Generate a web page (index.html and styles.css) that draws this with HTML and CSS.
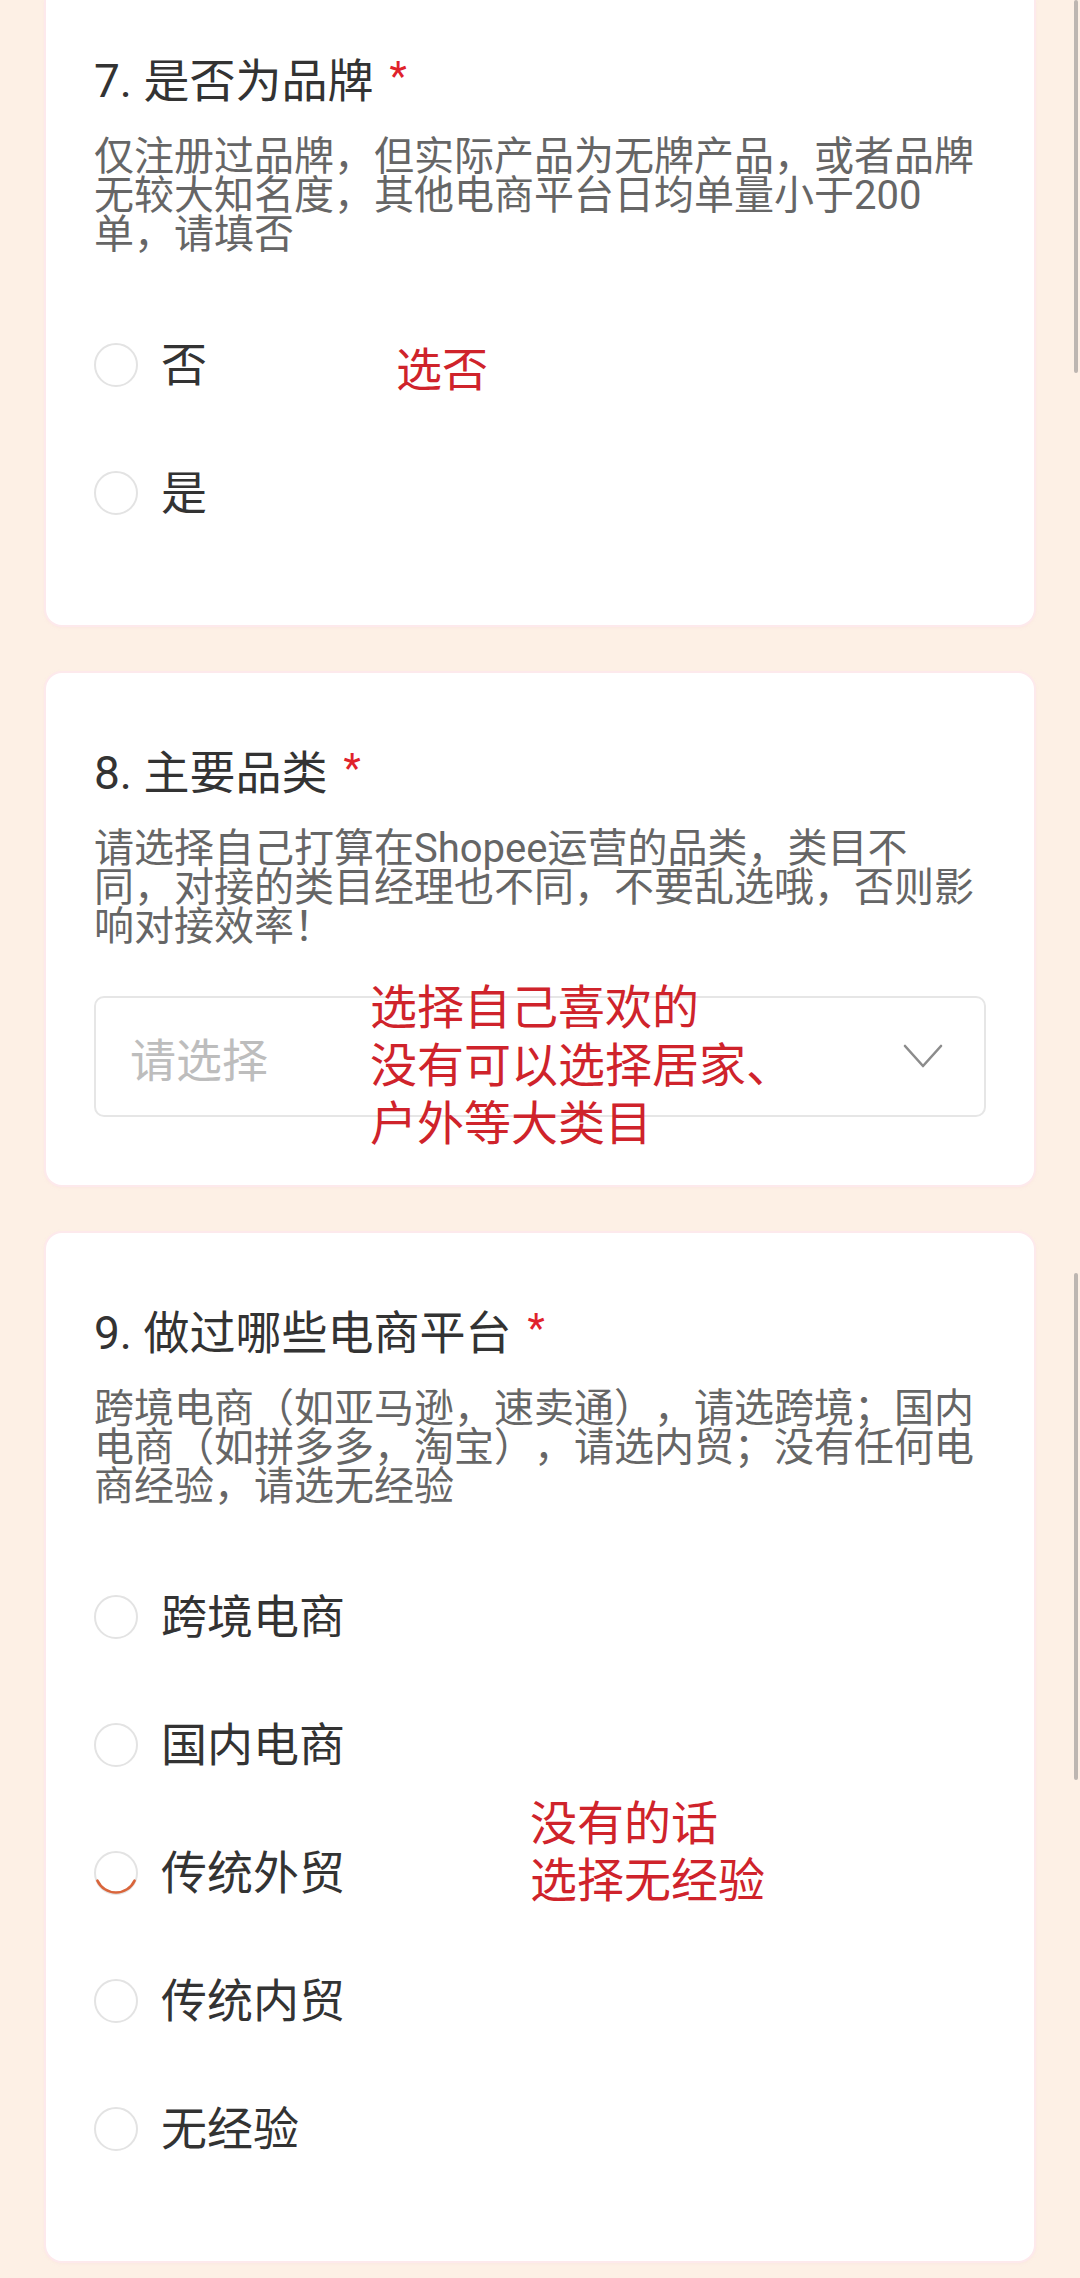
FILE: index.html
```html
<!DOCTYPE html>
<html lang="zh-CN">
<head>
<meta charset="utf-8">
<title>问卷</title>
<link rel="stylesheet" href="styles.css">
</head>
<body>
<div class="page">
  <section class="card card--cut">
    <h2 class="q-title">7. 是否为品牌<span class="req">*</span></h2>
    <p class="q-desc">仅注册过品牌，但实际产品为无牌产品，或者品牌无较大知名度，其他电商平台日均单量小于200单，请填否</p>
    <ul class="options">
      <li class="option"><span class="radio"></span><span class="opt-text">否</span></li>
      <li class="option"><span class="radio"></span><span class="opt-text">是</span></li>
    </ul>
    <div class="note note--a">选否</div>
  </section>

  <section class="card">
    <h2 class="q-title">8. 主要品类<span class="req">*</span></h2>
    <p class="q-desc">请选择自己打算在Shopee运营的品类，类目不同，对接的类目经理也不同，不要乱选哦，否则影响对接效率！</p>
    <div class="select">
      <span class="placeholder">请选择</span>
      <svg class="chevron" width="40" height="25" viewBox="0 0 40 25" aria-hidden="true">
        <path d="M2 2 L20 22 L38 2" fill="none" stroke="#8c8c8c" stroke-width="2.6" stroke-linecap="round" stroke-linejoin="round"/>
      </svg>
    </div>
    <div class="note note--b">选择自己喜欢的<br>没有可以选择居家、<br>户外等大类目</div>
  </section>

  <section class="card card--last">
    <h2 class="q-title">9. 做过哪些电商平台<span class="req">*</span></h2>
    <p class="q-desc">跨境电商（如亚马逊，速卖通），请选跨境；国内电商（如拼多多，淘宝），请选内贸；没有任何电商经验，请选无经验</p>
    <ul class="options">
      <li class="option"><span class="radio"></span><span class="opt-text">跨境电商</span></li>
      <li class="option"><span class="radio"></span><span class="opt-text">国内电商</span></li>
      <li class="option"><span class="radio radio--busy"><svg class="arc" width="44" height="44" viewBox="0 0 44 44" aria-hidden="true"><path d="M3.4 29.6 A20.5 20.5 0 0 0 40.6 29.6" fill="none" stroke="#d9653b" stroke-width="2.6" stroke-linecap="round"/></svg></span><span class="opt-text">传统外贸</span></li>
      <li class="option"><span class="radio"></span><span class="opt-text">传统内贸</span></li>
      <li class="option"><span class="radio"></span><span class="opt-text">无经验</span></li>
    </ul>
    <div class="note note--c">没有的话<br>选择无经验</div>
  </section>

  <div class="scrollbar scrollbar--top"></div>
  <div class="scrollbar scrollbar--mid"></div>
</div>
</body>
</html>
```

FILE: styles.css
```css
html, body {
  margin: 0;
  padding: 0;
}

body {
  background: #fdf0e5;
  font-family: Roboto, "Noto Sans CJK SC", "Noto Sans", sans-serif;
  color: #333333;
  text-spacing-trim: space-all;
}

.page {
  position: relative;
  width: 1080px;
  height: 2278px;
  overflow: hidden;
  display: flex;
  flex-direction: column;
  gap: 48px;
}

.card {
  position: relative;
  margin-left: 46px;
  width: 988px;
  box-sizing: border-box;
  padding: 70px 48px 68px;
  background: #ffffff;
  border-radius: 16px;
  box-shadow: 0 0 0 2px #fde9ec, 0 1px 4px rgba(240, 190, 200, 0.35);
}

.card--cut {
  padding-top: 51px;
  border-top-left-radius: 0;
  border-top-right-radius: 0;
}

.q-title {
  margin: 0;
  font-size: 46px;
  line-height: 60px;
  font-weight: 400;
  color: #333333;
}

.req {
  color: #e0222b;
  margin-left: 16px;
  font-size: 40px;
  vertical-align: top;
  position: relative;
  top: -4px;
}

.q-desc {
  margin: 26px 0 0;
  font-size: 40px;
  line-height: 39px;
  color: #666666;
}

.options {
  list-style: none;
  margin: 47px 0 0;
  padding: 0;
  display: flex;
  flex-direction: column;
}

.option {
  height: 128px;
  display: flex;
  align-items: center;
  gap: 23px;
}

.radio {
  position: relative;
  width: 44px;
  height: 44px;
  box-sizing: border-box;
  border: 2px solid #e3e3e3;
  border-radius: 50%;
  flex: none;
}

.arc {
  position: absolute;
  left: -2px;
  top: -2px;
}

.opt-text {
  font-size: 46px;
  line-height: 60px;
  color: #333333;
}

.select {
  margin-top: 50px;
  height: 121px;
  box-sizing: border-box;
  border: 2px solid #e6e6e6;
  border-radius: 10px;
  display: flex;
  align-items: center;
  justify-content: space-between;
  padding: 0 41px 0 34px;
}

.placeholder {
  font-size: 46px;
  color: #bdbdbd;
}

.chevron {
  display: block;
}

.note {
  position: absolute;
  color: #cf232b;
  font-size: 47px;
  line-height: 57px;
  white-space: nowrap;
}

.note--a {
  left: 350px;
  top: 342px;
  font-size: 46px;
  line-height: 56px;
}

.note--b {
  left: 324px;
  top: 306px;
  line-height: 58px;
}

.note--c {
  left: 484px;
  top: 562px;
}

.scrollbar {
  position: absolute;
  right: 2px;
  width: 4px;
  background: #bdb6b1;
  border-radius: 2px;
}

.scrollbar--top {
  top: 0;
  height: 373px;
}

.scrollbar--mid {
  top: 1273px;
  height: 507px;
}
```
